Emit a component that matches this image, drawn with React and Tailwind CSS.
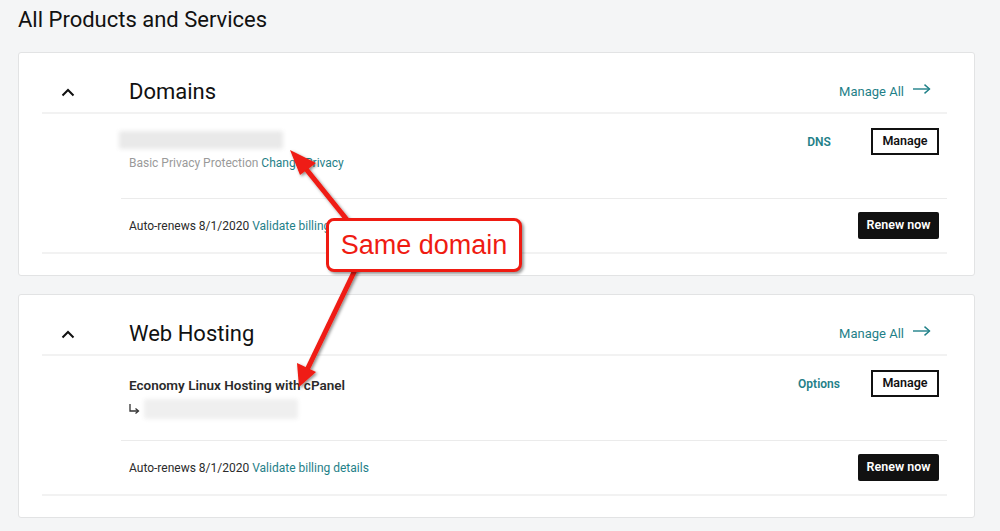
import React from "react";

const TEAL = "text-[#1f8088]";

function Chevron() {
  return (
    <svg width="14" height="9" viewBox="0 0 14 9" className="block">
      <polyline points="1.5,7.5 7,2 12.5,7.5" fill="none" stroke="#111" strokeWidth="2" />
    </svg>
  );
}

function ArrowRight() {
  return (
    <svg width="18" height="10" viewBox="0 0 18 10" className="block">
      <line x1="0" y1="5" x2="16.5" y2="5" stroke="#1f8088" strokeWidth="1.4" />
      <polyline points="11.5,0.6 16.5,5 11.5,9.4" fill="none" stroke="#1f8088" strokeWidth="1.4" />
    </svg>
  );
}

function SubArrow() {
  return (
    <svg width="11" height="10" viewBox="0 0 11 10" className="block">
      <polyline points="1,0 1,7 9,7" fill="none" stroke="#333" strokeWidth="1.3" />
      <polyline points="6.5,4.5 9.5,7 6.5,9.5" fill="none" stroke="#333" strokeWidth="1.3" />
    </svg>
  );
}

function ManageBtn() {
  return (
    <button className="h-[27px] w-[68px] border-2 border-[#111] bg-white text-[12.5px] font-semibold text-[#111]">
      Manage
    </button>
  );
}

function RenewBtn() {
  return (
    <button className="h-[27px] w-[81px] rounded-[2px] bg-[#111] text-[12.5px] font-semibold text-white">
      Renew now
    </button>
  );
}

function Card({ title, children }) {
  return (
    <div className="rounded-[3px] border border-[#e2e3e4] bg-white pl-[23px] pr-[27px] pb-[21px]">
      <div className="flex h-[61px] items-center border-b-2 border-[#f2f2f2] pt-[18px]">
        <div className="w-[87px] pl-[19px] pt-[2px]">
          <Chevron />
        </div>
        <div className="flex-1 text-[22px] text-[#111]">{title}</div>
        <div className={`flex items-center gap-[9px] pr-[16px] text-[13px] ${TEAL}`}>
          <span>Manage All</span>
          <span className="-mt-[5px]">
            <ArrowRight />
          </span>
        </div>
      </div>
      <div className="ml-[79px]">{children}</div>
      <div className="border-b-2 border-[#f2f2f2]" />
    </div>
  );
}

function Renewal() {
  return (
    <div className="flex h-[54px] items-center justify-between border-t border-[#ebebeb] pl-[8px] pr-[8px]">
      <div className="text-[12px] text-[#2b2b2b]">
        Auto-renews 8/1/2020 <span className={TEAL}>Validate billing details</span>
      </div>
      <RenewBtn />
    </div>
  );
}

export default function App() {
  return (
    <div
      className="relative min-h-[531px] w-[1000px] bg-[#f4f5f6] pb-[12px] pl-[18px] pr-[25px]"
      style={{ fontFamily: "Roboto, 'Liberation Sans', sans-serif" }}
    >
      <div className="flex h-[52px] items-start pt-[3px] text-[22px] text-[#111]">All Products and Services</div>

      <div className="flex flex-col gap-[18px]">
        <Card title="Domains">
          <div className="flex h-[84px] items-start justify-between pl-[8px] pr-[8px] pt-[14px]">
            <div className="pt-[3px]">
              <div className="-ml-[10px] h-[18px] w-[164px] rounded-[2px] bg-[#e9e9e9] blur-[2px]" />
              <div className="mt-[5px] text-[12px] text-[#9a9a9a]">
                Basic Privacy Protection <span className={TEAL}>Change Privacy</span>
              </div>
            </div>
            <div className="flex items-center gap-[12px]">
              <div className={`w-[80px] text-center text-[12px] font-semibold ${TEAL}`}>DNS</div>
              <ManageBtn />
            </div>
          </div>
          <Renewal />
        </Card>

        <Card title="Web Hosting">
          <div className="flex h-[84px] items-start justify-between pl-[8px] pr-[8px] pt-[14px]">
            <div className="pt-[5px]">
              <div className="text-[13.5px] font-semibold text-[#2b2b2b]">Economy Linux Hosting with cPanel</div>
              <div className="mt-[4px] flex items-center gap-[4px]">
                <SubArrow />
                <div className="h-[20px] w-[154px] rounded-[2px] bg-[#efefef] blur-[2px]" />
              </div>
            </div>
            <div className="flex items-center gap-[12px]">
              <div className={`w-[80px] text-center text-[12px] font-semibold ${TEAL}`}>Options</div>
              <ManageBtn />
            </div>
          </div>
          <Renewal />
        </Card>
      </div>

      {/* Annotation overlay */}
      <svg className="pointer-events-none absolute left-0 top-0" width="1000" height="531">
        <defs>
          <filter id="sh" x="-20%" y="-20%" width="140%" height="140%">
            <feDropShadow dx="1.5" dy="1.5" stdDeviation="1.5" floodColor="#000" floodOpacity="0.45" />
          </filter>
        </defs>
        <g filter="url(#sh)">
          <line x1="352" y1="226" x2="302" y2="164" stroke="#ef1b12" strokeWidth="5" />
          <polygon points="290,150 316,163 300,175" fill="#ef1b12" />
          <line x1="356" y1="268" x2="306" y2="372" stroke="#ef1b12" strokeWidth="5" />
          <polygon points="299,387 297,363 316,372" fill="#ef1b12" />
        </g>
      </svg>
      <div className="absolute left-[326px] top-[218px] flex h-[54px] w-[196px] items-center justify-center rounded-[8px] border-[3px] border-[#ef1b12] bg-white shadow-[2px_2px_3px_rgba(0,0,0,0.4)]">
        <span className="text-[27px] text-[#ef1b12]" style={{ fontFamily: "'Liberation Sans', Arial, sans-serif" }}>
          Same domain
        </span>
      </div>
    </div>
  );
}
